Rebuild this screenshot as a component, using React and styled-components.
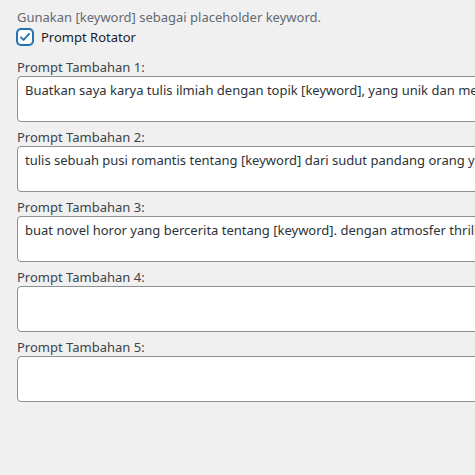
import styled, { createGlobalStyle } from 'styled-components'

const GlobalStyle = createGlobalStyle`
  html, body {
    margin: 0;
    padding: 0;
    overflow: hidden;
    background: #f0f0f1;
  }
  body {
    font-family: 'Noto Sans', 'Open Sans', sans-serif;
    color: #1d2327;
  }
`

const prompts = [
  'Buatkan saya karya tulis ilmiah dengan topik [keyword], yang unik dan menarik untuk dibaca oleh semua kalangan',
  'tulis sebuah pusi romantis tentang [keyword] dari sudut pandang orang yang sedang jatuh cinta',
  'buat novel horor yang bercerita tentang [keyword]. dengan atmosfer thriller yang mencekam',
  '',
  ''
]

export default function App() {
  return (
    <>
      <GlobalStyle />
      <Page>
        <Hint>Gunakan [keyword] sebagai placeholder keyword.</Hint>
        <CheckRow>
          <CheckBox>
            <svg viewBox="0 0 20 20" width="16" height="16">
              <path d="M4.2 10.4l3.8 3.8 7.8-8.6" fill="none" stroke="#2271b1" strokeWidth="2.6" strokeLinecap="round" strokeLinejoin="round" />
            </svg>
          </CheckBox>
          <CheckLabel>Prompt Rotator</CheckLabel>
        </CheckRow>
        <Fields>
          {prompts.map((text, i) => (
            <Field key={i}>
              <Label>Prompt Tambahan {i + 1}:</Label>
              <TextArea defaultValue={text} rows={2} spellCheck={false} />
            </Field>
          ))}
        </Fields>
      </Page>
    </>
  )
}

const Page = styled.div`
  display: flex;
  flex-direction: column;
  padding: 7px 0 0 17px;
  width: 100vw;
  height: 100vh;
  overflow: hidden;
  box-sizing: border-box;
`

const Hint = styled.p`
  margin: 0;
  font-size: 13px;
  line-height: 20px;
  color: #646970;
`

const CheckRow = styled.div`
  display: flex;
  align-items: center;
  column-gap: 8px;
  height: 20px;
`

const CheckBox = styled.span`
  box-sizing: border-box;
  width: 16px;
  height: 16px;
  border: 1px solid #2271b1;
  border-radius: 4px;
  background: #fff;
  display: flex;
  align-items: center;
  justify-content: center;
  box-shadow: 0 0 0 1px #2271b1;
`

const CheckLabel = styled.span`
  font-size: 13px;
  line-height: 20px;
  color: #1d2327;
`

const Fields = styled.div`
  display: flex;
  flex-direction: column;
  row-gap: 6px;
  margin-top: 11px;
`

const Field = styled.div`
  display: flex;
  flex-direction: column;
`

const Label = styled.label`
  font-size: 13px;
  line-height: 18px;
  color: #3c434a;
`

const TextArea = styled.textarea`
  box-sizing: border-box;
  flex: none;
  width: 900px;
  height: 46px;
  padding: 3px 7px;
  border: 1px solid #8c8f94;
  border-radius: 4px;
  background: #fff;
  font-family: 'Noto Sans', 'Open Sans', sans-serif;
  font-size: 13px;
  line-height: 20px;
  color: #2c3338;
  resize: none;
  overflow: hidden;
  white-space: pre;
  outline: none;
`
